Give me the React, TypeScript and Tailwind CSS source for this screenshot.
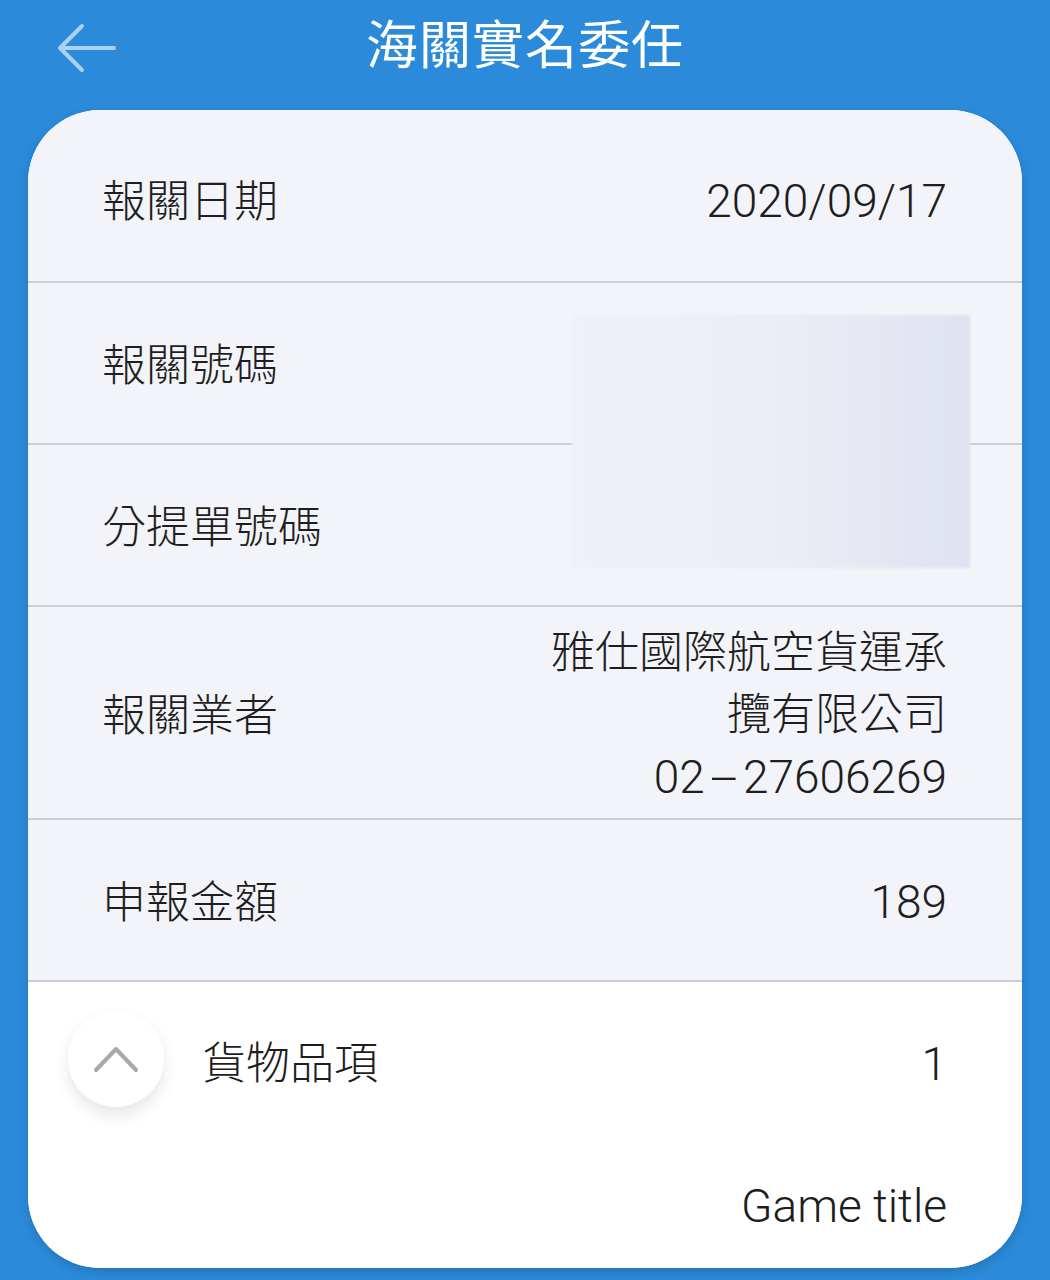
import React from 'react';

const font = { fontFamily: 'Roboto, "Noto Sans CJK TC", "Noto Sans", sans-serif' };

interface Row {
  label: string;
  value?: React.ReactNode[];
  tall?: boolean;
}

const rows: Row[] = [
  { label: '報關日期', value: [<span className="text-[46px]">2020/09/17</span>] },
  { label: '報關號碼' },
  { label: '分提單號碼' },
  {
    label: '報關業者',
    value: [
      '雅仕國際航空貨運承',
      '攬有限公司',
      <span className="text-[46px]">
        02<span className="inline-block w-[38px] text-center scale-x-[2.2]">-</span>27606269
      </span>,
    ],
    tall: true,
  },
  { label: '申報金額', value: [<span className="text-[46px]">189</span>] },
];

export default function App() {
  return (
    <div className="w-[1050px] h-[1280px] bg-[#2b8ad9] overflow-hidden font-light" style={font}>
      {/* Header */}
      <div className="relative h-[94px] flex items-center justify-center">
        <button className="absolute left-[56px] top-[22px] w-[62px] h-[52px] flex items-center justify-center">
          <svg width="60" height="50" viewBox="0 0 60 50" fill="none" stroke="#a9d2f6" strokeWidth="4" strokeLinecap="round" strokeLinejoin="round">
            <path d="M57 25H4" />
            <path d="M25 3L3 25l22 22" />
          </svg>
        </button>
        <h1 className="text-white text-[52px] leading-none tracking-[1px] font-normal">海關實名委任</h1>
      </div>

      {/* Card */}
      <div className="mt-[16px] mx-[28px] h-[1158px] rounded-[72px] overflow-hidden bg-white shadow-[0_4px_10px_rgba(0,0,0,0.15)]">
        <div className="relative bg-[#f2f4f9]">
          {rows.map((row, i) => (
            <div key={i}>
              <div
                className={
                  row.tall
                    ? 'h-[211px] pt-[6px] flex items-center justify-between pl-[74px] pr-[75px]'
                    : i === 0
                    ? 'h-[171px] pt-[12px] flex items-center justify-between pl-[74px] pr-[75px]'
                    : 'h-[160px] pt-[5px] flex items-center justify-between pl-[74px] pr-[75px]'
                }
              >
                <span className="text-[44px] leading-none text-[#1e1e1e]">{row.label}</span>
                {row.value && (
                  <div className="w-[404px] text-right text-[44px] leading-[62px] text-[#1e1e1e]">
                    {row.value.map((v, j) => (
                      <div key={j}>{v}</div>
                    ))}
                  </div>
                )}
              </div>
              <div className="h-[2px] bg-[#cbced5]" />
            </div>
          ))}
          {/* blurred / redacted area */}
          <div className="absolute left-[544px] top-[205px] w-[398px] h-[253px] bg-gradient-to-r from-[#f0f1f6] via-[#eceef4] to-[#dfe3f1] blur-[1px]" />
        </div>

        {/* Goods section */}
        <div className="bg-white">
          <div className="h-[162px] pt-[2px] flex items-center pl-[40px] pr-[75px]">
            <div className="w-[96px] h-[96px] -mt-[10px] rounded-full bg-white shadow-[0_8px_16px_rgba(0,0,0,0.10)] flex items-center justify-center">
              <svg width="46" height="28" viewBox="0 0 46 28" fill="none" stroke="#a8a8a8" strokeWidth="4" strokeLinecap="round" strokeLinejoin="round">
                <path d="M3 25L23 4l20 21" />
              </svg>
            </div>
            <span className="ml-[38px] text-[44px] leading-none text-[#1e1e1e]">貨物品項</span>
            <span className="ml-auto text-[46px] leading-none text-[#1e1e1e]">1</span>
          </div>
          <div className="h-[124px] flex items-center justify-end pr-[75px]">
            <span className="text-[46px] leading-none text-[#1e1e1e]">Game title</span>
          </div>
        </div>
      </div>
    </div>
  );
}
